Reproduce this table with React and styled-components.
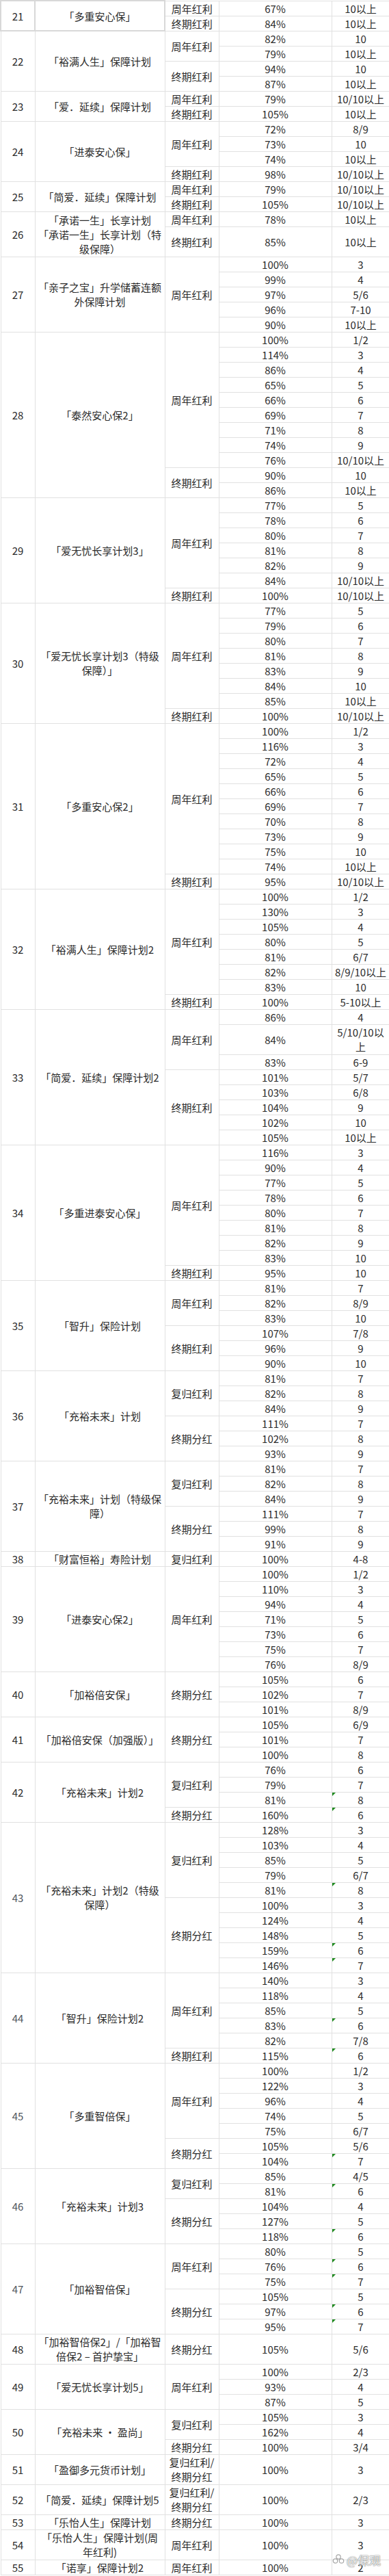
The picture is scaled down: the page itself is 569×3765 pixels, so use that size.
import React from 'react';
import styled, { createGlobalStyle } from 'styled-components';

const GlobalStyle = createGlobalStyle`
  html, body {
    margin: 0;
    padding: 0;
    background: #fff;
  }
`;

const UNIT = 22;

const Page = styled.div`
  position: relative;
  width: 569px;
`;

const Sheet = styled.table`
  width: 569px;
  table-layout: fixed;
  border-collapse: collapse;
  font-family: 'Noto Sans CJK SC', 'Noto Sans', sans-serif;
  font-size: 15px;
  color: #2b2b2b;
`;

const Col = styled.col`
  width: ${p => p.$w}px;
`;

const Row = styled.tr`
  height: ${p => p.$units * UNIT}px;
`;

const Cell = styled.td`
  border: 1px solid #e1e1e1;
  padding: 0 2px;
  text-align: center;
  vertical-align: middle;
  line-height: 21px;
  position: relative;
  color: ${p => (p.$muted ? '#50555c' : 'inherit')};
  ${p => p.$framed && 'border: 2px solid #d8d8d8;'}

  ${p =>
    p.$flag &&
    `
    &::before {
      content: '';
      position: absolute;
      left: 0;
      top: 0;
      border-top: 5px solid #1f8a1f;
      border-right: 5px solid transparent;
    }
  `}
`;

const Watermark = styled.div`
  position: absolute;
  right: 12px;
  bottom: 10px;
  display: flex;
  align-items: center;
  gap: 2px;
  font-family: 'Noto Sans CJK SC', sans-serif;
  font-size: 17px;
  color: rgba(255, 255, 255, 0.9);
  text-shadow: 0 0 2px rgba(0, 0, 0, 0.45), 0 0 1px rgba(0, 0, 0, 0.5);
  pointer-events: none;
`;

const plans = [
  { no: 21, name: '「多重安心保」', framed: true, sections: [
    ['周年红利', [['67%', '10以上']]],
    ['终期红利', [['84%', '10以上']]],
  ] },
  { no: 22, name: '「裕满人生」保障计划', sections: [
    ['周年红利', [['82%', '10'], ['79%', '10以上']]],
    ['终期红利', [['94%', '10'], ['87%', '10以上']]],
  ] },
  { no: 23, name: '「爱．延续」保障计划', sections: [
    ['周年红利', [['79%', '10/10以上']]],
    ['终期红利', [['105%', '10以上']]],
  ] },
  { no: 24, name: '「进泰安心保」', sections: [
    ['周年红利', [['72%', '8/9'], ['73%', '10'], ['74%', '10以上']]],
    ['终期红利', [['98%', '10/10以上']]],
  ] },
  { no: 25, name: '「简爱．延续」保障计划', sections: [
    ['周年红利', [['79%', '10/10以上']]],
    ['终期红利', [['105%', '10/10以上']]],
  ] },
  { no: 26, name: ['「承诺一生」长享计划', '「承诺一生」长享计划（特级保障）'], sections: [
    ['周年红利', [['78%', '10以上']]],
    ['终期红利', [['85%', '10以上', 'h']]],
  ] },
  { no: 27, name: '「亲子之宝」升学储蓄连额外保障计划', sections: [
    ['周年红利', [['100%', '3'], ['99%', '4'], ['97%', '5/6'], ['96%', '7-10'], ['90%', '10以上']]],
  ] },
  { no: 28, name: '「泰然安心保2」', sections: [
    ['周年红利', [['100%', '1/2'], ['114%', '3'], ['86%', '4'], ['65%', '5'], ['66%', '6'], ['69%', '7'], ['71%', '8'], ['74%', '9'], ['76%', '10/10以上']]],
    ['终期红利', [['90%', '10'], ['86%', '10以上']]],
  ] },
  { no: 29, name: '「爱无忧长享计划3」', sections: [
    ['周年红利', [['77%', '5'], ['78%', '6'], ['80%', '7'], ['81%', '8'], ['82%', '9'], ['84%', '10/10以上']]],
    ['终期红利', [['100%', '10/10以上']]],
  ] },
  { no: 30, name: '「爱无忧长享计划3（特级保障）」', sections: [
    ['周年红利', [['77%', '5'], ['79%', '6'], ['80%', '7'], ['81%', '8'], ['83%', '9'], ['84%', '10'], ['85%', '10以上']]],
    ['终期红利', [['100%', '10/10以上']]],
  ] },
  { no: 31, name: '「多重安心保2」', sections: [
    ['周年红利', [['100%', '1/2'], ['116%', '3'], ['72%', '4'], ['65%', '5'], ['66%', '6'], ['69%', '7'], ['70%', '8'], ['73%', '9'], ['75%', '10'], ['74%', '10以上']]],
    ['终期红利', [['95%', '10/10以上']]],
  ] },
  { no: 32, name: '「裕满人生」保障计划2', sections: [
    ['周年红利', [['100%', '1/2'], ['130%', '3'], ['105%', '4'], ['80%', '5'], ['81%', '6/7'], ['82%', '8/9/10以上'], ['83%', '10']]],
    ['终期红利', [['100%', '5-10以上']]],
  ] },
  { no: 33, name: '「简爱．延续」保障计划2', sections: [
    ['周年红利', [['86%', '4'], ['84%', '5/10/10以上', 'h'], ['83%', '6-9']]],
    ['终期红利', [['101%', '5/7'], ['103%', '6/8'], ['104%', '9'], ['102%', '10'], ['105%', '10以上']]],
  ] },
  { no: 34, name: '「多重进泰安心保」', sections: [
    ['周年红利', [['116%', '3'], ['90%', '4'], ['77%', '5'], ['78%', '6'], ['80%', '7'], ['81%', '8'], ['82%', '9'], ['83%', '10']]],
    ['终期红利', [['95%', '10']]],
  ] },
  { no: 35, name: '「智升」保险计划', sections: [
    ['周年红利', [['81%', '7'], ['82%', '8/9'], ['83%', '10']]],
    ['终期红利', [['107%', '7/8'], ['96%', '9'], ['90%', '10']]],
  ] },
  { no: 36, name: '「充裕未来」计划', sections: [
    ['复归红利', [['81%', '7'], ['82%', '8'], ['84%', '9']]],
    ['终期分红', [['111%', '7'], ['102%', '8'], ['93%', '9']]],
  ] },
  { no: 37, name: '「充裕未来」计划（特级保障）', sections: [
    ['复归红利', [['81%', '7'], ['82%', '8'], ['84%', '9']]],
    ['终期分红', [['111%', '7'], ['99%', '8'], ['91%', '9']]],
  ] },
  { no: 38, name: '「财富恒裕」寿险计划', sections: [
    ['复归红利', [['100%', '4-8']]],
  ] },
  { no: 39, name: '「进泰安心保2」', sections: [
    ['周年红利', [['100%', '1/2'], ['110%', '3'], ['94%', '4'], ['71%', '5'], ['73%', '6'], ['75%', '7'], ['76%', '8/9']]],
  ] },
  { no: 40, name: '「加裕倍安保」', sections: [
    ['终期分红', [['105%', '6'], ['102%', '7'], ['101%', '8/9']]],
  ] },
  { no: 41, name: '「加裕倍安保（加强版）」', sections: [
    ['终期分红', [['105%', '6/9'], ['101%', '7'], ['100%', '8']]],
  ] },
  { no: 42, name: '「充裕未来」计划2', sections: [
    ['复归红利', [['76%', '6'], ['79%', '7'], ['81%', '8', 'g']]],
    ['终期分红', [['160%', '6', 'g']]],
  ] },
  { no: 43, muted: true, name: '「充裕未来」计划2（特级保障）', sections: [
    ['复归红利', [['128%', '3'], ['103%', '4'], ['85%', '5'], ['79%', '6/7'], ['81%', '8', 'g']]],
    ['终期分红', [['100%', '3'], ['124%', '4'], ['148%', '5'], ['159%', '6', 'g'], ['146%', '7', 'g']]],
  ] },
  { no: 44, muted: true, name: '「智升」保险计划2', sections: [
    ['周年红利', [['140%', '3'], ['118%', '4'], ['85%', '5'], ['83%', '6', 'g'], ['82%', '7/8']]],
    ['终期红利', [['115%', '6', 'g']]],
  ] },
  { no: 45, muted: true, name: '「多重智倍保」', sections: [
    ['周年红利', [['100%', '1/2'], ['122%', '3'], ['96%', '4'], ['74%', '5'], ['75%', '6/7']]],
    ['终期分红', [['105%', '5/6'], ['104%', '7', 'g']]],
  ] },
  { no: 46, muted: true, name: '「充裕未来」计划3', sections: [
    ['复归红利', [['85%', '4/5'], ['81%', '6', 'g']]],
    ['终期分红', [['104%', '4'], ['127%', '5'], ['118%', '6', 'g']]],
  ] },
  { no: 47, muted: true, name: '「加裕智倍保」', sections: [
    ['周年红利', [['80%', '5'], ['76%', '6', 'g'], ['75%', '7', 'g']]],
    ['终期分红', [['105%', '5'], ['97%', '6', 'g'], ['95%', '7', 'g']]],
  ] },
  { no: 48, name: '「加裕智倍保2」/「加裕智倍保2 – 首护挚宝」', sections: [
    ['终期分红', [['105%', '5/6', 'h']]],
  ] },
  { no: 49, name: '「爱无忧长享计划5」', sections: [
    ['周年红利', [['100%', '2/3'], ['93%', '4'], ['87%', '5']]],
  ] },
  { no: 50, name: '「充裕未来 • 盈尚」', sections: [
    ['复归红利', [['105%', '3'], ['162%', '4']]],
    ['终期分红', [['100%', '3/4']]],
  ] },
  { no: 51, name: '「盈御多元货币计划」', sections: [
    ['复归红利/终期分红', [['100%', '3', 'h']]],
  ] },
  { no: 52, name: '「简爱．延续」保障计划5', sections: [
    ['复归红利/终期分红', [['100%', '2/3', 'h']]],
  ] },
  { no: 53, name: '「乐怡人生」保障计划', sections: [
    ['终期分红', [['100%', '3']]],
  ] },
  { no: 54, name: '「乐怡人生」保障计划(周年红利)', sections: [
    ['周年红利', [['100%', '3', 'h']]],
  ] },
  { no: 55, name: '「诺享」保障计划2', sections: [
    ['周年红利', [['100%', '2']]],
  ] },
];

const PlanName = ({ name }) =>
  Array.isArray(name)
    ? name.map((line, i) => (
        <React.Fragment key={i}>
          {i > 0 && <br />}
          {line}
        </React.Fragment>
      ))
    : name;

const PlanRows = ({ plan }) => {
  const total = plan.sections.reduce((n, [, rows]) => n + rows.length, 0);
  const out = [];
  plan.sections.forEach(([label, rows], si) => {
    rows.forEach(([pct, years, flags = ''], ri) => {
      const first = si === 0 && ri === 0;
      out.push(
        <Row key={`${si}-${ri}`} $units={flags.includes('h') ? 2 : 1}>
          {first && (
            <Cell rowSpan={total} $muted={plan.muted} $framed={plan.framed}>
              {plan.no}
            </Cell>
          )}
          {first && (
            <Cell rowSpan={total} $framed={plan.framed}>
              <PlanName name={plan.name} />
            </Cell>
          )}
          {ri === 0 && <Cell rowSpan={rows.length}>{label}</Cell>}
          <Cell>{pct}</Cell>
          <Cell $flag={flags.includes('g')}>{years}</Cell>
        </Row>
      );
    });
  });
  return out;
};

const Badge = () => (
  <svg width="20" height="20" viewBox="0 0 20 20">
    <g fill="rgba(255,255,255,0.9)" stroke="rgba(0,0,0,0.35)" strokeWidth="1.2">
      <circle cx="10" cy="6" r="3.2" />
      <circle cx="5.5" cy="12" r="3.2" />
      <circle cx="14.5" cy="12" r="3.2" />
    </g>
  </svg>
);

const App = () => (
  <>
    <GlobalStyle />
    <Page>
      <Sheet>
        <colgroup>
          <Col $w={50} />
          <Col $w={190} />
          <Col $w={79} />
          <Col $w={165} />
          <Col $w={85} />
        </colgroup>
        <tbody>
          {plans.map(plan => (
            <PlanRows key={plan.no} plan={plan} />
          ))}
        </tbody>
      </Sheet>
      <Watermark>
        <Badge />
        <span>@保观</span>
      </Watermark>
    </Page>
  </>
);

export default App;
